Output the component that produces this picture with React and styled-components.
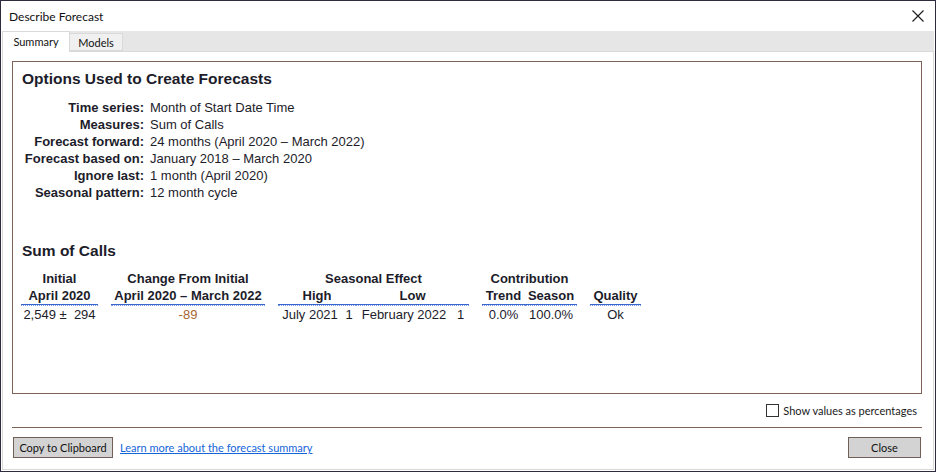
import React from 'react';
import styled, { createGlobalStyle } from 'styled-components';

const GlobalStyle = createGlobalStyle`
  html, body {
    margin: 0;
    padding: 0;
    background: #ffffff;
  }
  * {
    box-sizing: border-box;
  }
`;

const uiFont = `"Segoe UI", Lato, "Liberation Sans", sans-serif`;
const reportFont = `"Liberation Sans", Arial, sans-serif`;

const Window = styled.div`
  width: 936px;
  height: 472px;
  border: 1px solid #2c2c3c;
  background: #ffffff;
  display: flex;
  flex-direction: column;
  font-family: ${uiFont};
  color: #1a1a1a;
`;

const TitleBar = styled.div`
  height: 30px;
  display: flex;
  align-items: center;
  justify-content: space-between;
  padding: 0 8px 0 8px;
  font-size: 12px;
  color: #111;
`;

const CloseX = styled.button`
  width: 16px;
  height: 16px;
  border: none;
  background: none;
  padding: 0;
  margin-right: 1px;
  display: flex;
  align-items: center;
  justify-content: center;
`;

const TabStrip = styled.div`
  height: 20px;
  background: #e6e6e6;
  display: flex;
  align-items: flex-end;
  margin: 0 1px;
  position: relative;
  z-index: 1;
`;

const Tab = styled.div`
  height: ${p => (p.$active ? '21px' : '18px')};
  margin-bottom: ${p => (p.$active ? '-1px' : '0')};
  padding: ${p => (p.$active ? '0 0 2px' : '0')};
  width: ${p => p.$width}px;
  background: ${p => (p.$active ? '#ffffff' : '#f0f0f0')};
  border: 1px solid #d9d9d9;
  border-bottom: ${p => (p.$active ? 'none' : '1px solid #d9d9d9')};
  border-left: ${p => (p.$active ? '1px solid #d9d9d9' : 'none')};
  font-size: 11px;
  display: flex;
  align-items: center;
  justify-content: center;
  color: #111;
`;

const Page = styled.div`
  flex: 1;
  margin: 0 1px 1px 1px;
  border: 1px solid #d9d9d9;
  background: #ffffff;
  padding: 9px 11px 0 9px;
  display: flex;
  flex-direction: column;
`;

const ReportBox = styled.div`
  height: 333px;
  border: 1px solid #7b6358;
  padding: 7px 9px 0 9px;
  font-family: ${reportFont};
  font-size: 13px;
  color: #1c1c2a;
`;

const SectionTitle = styled.div`
  font-size: 15.5px;
  font-weight: bold;
  line-height: 20px;
  margin-top: ${p => p.$top || 0}px;
`;

const OptionList = styled.div`
  display: grid;
  grid-template-columns: 122px auto;
  column-gap: 6px;
  margin-top: 10px;
  line-height: 17px;
`;

const OptionLabel = styled.div`
  font-weight: bold;
  text-align: right;
  white-space: nowrap;
`;

const OptionValue = styled.div`
  white-space: nowrap;
`;

const SummaryTable = styled.div`
  display: flex;
  gap: 13px;
  margin-top: 9px;
  margin-left: -1px;
  line-height: 17px;
`;

const Group = styled.div`
  width: ${p => p.$width}px;
  display: grid;
  grid-template-columns: ${p => p.$cols};
`;

const GroupTitle = styled.div`
  grid-column: 1 / -1;
  font-weight: bold;
  text-align: center;
  white-space: nowrap;
`;

const SubHeader = styled.div`
  grid-column: span ${p => p.$span || 1};
  font-weight: bold;
  text-align: center;
  white-space: nowrap;
  border-bottom: 1px dotted #7d9be0;
  box-shadow: inset 0 -1px 0 #3766d2;
  height: 19px;
  line-height: 17px;
`;

const Cell = styled.div`
  text-align: center;
  white-space: nowrap;
  color: ${p => p.$color || 'inherit'};
`;

const CheckRow = styled.div`
  height: 33px;
  display: flex;
  align-items: center;
  justify-content: flex-end;
  gap: 4px;
  padding-right: 5px;
  font-size: 11px;
`;

const CheckBox = styled.span`
  width: 13px;
  height: 13px;
  border: 1px solid #333333;
  background: #ffffff;
  display: inline-block;
`;

const Divider = styled.div`
  height: 1px;
  background: #7b6358;
`;

const Footer = styled.div`
  display: flex;
  align-items: center;
  padding: 9px 1px 0 1px;
  gap: 7px;
`;

const Button = styled.button`
  height: 21px;
  width: ${p => p.$width}px;
  border: 1px solid #6f6058;
  background-color: #d3d3d3;
  background-image: radial-gradient(#e6e6e6 0.7px, transparent 0.7px);
  background-size: 2px 2px;
  font-family: ${uiFont};
  font-size: 11px;
  color: #111;
  padding: 0;
  margin-left: ${p => (p.$push ? 'auto' : '0')};
`;

const HelpLink = styled.a`
  font-size: 11px;
  color: #1565d8;
  text-decoration: underline;
  cursor: pointer;
`;

const options = [
  ['Time series:', 'Month of Start Date Time'],
  ['Measures:', 'Sum of Calls'],
  ['Forecast forward:', '24 months (April 2020 \u2013 March 2022)'],
  ['Forecast based on:', 'January 2018 \u2013 March 2020'],
  ['Ignore last:', '1 month (April 2020)'],
  ['Seasonal pattern:', '12 month cycle'],
];

export default function App() {
  return (
    <>
      <GlobalStyle />
      <Window>
        <TitleBar>
          <span>Describe Forecast</span>
          <CloseX aria-label="Close">
            <svg width="12" height="12" viewBox="0 0 12 12">
              <path d="M0.5 0.5 L11.5 11.5 M11.5 0.5 L0.5 11.5" stroke="#1a1a1a" strokeWidth="1.1" fill="none" />
            </svg>
          </CloseX>
        </TitleBar>
        <TabStrip>
          <Tab $active $width={68}>Summary</Tab>
          <Tab $width={53}>Models</Tab>
        </TabStrip>
        <Page>
          <ReportBox>
            <SectionTitle>Options Used to Create Forecasts</SectionTitle>
            <OptionList>
              {options.map(([label, value]) => (
                <React.Fragment key={label}>
                  <OptionLabel>{label}</OptionLabel>
                  <OptionValue>{value}</OptionValue>
                </React.Fragment>
              ))}
            </OptionList>

            <SectionTitle $top={40}>Sum of Calls</SectionTitle>
            <SummaryTable>
              <Group $width={77} $cols="1fr">
                <GroupTitle>Initial</GroupTitle>
                <SubHeader>April 2020</SubHeader>
                <Cell>2,549 ±&nbsp;&nbsp;294</Cell>
              </Group>
              <Group $width={154} $cols="1fr">
                <GroupTitle>Change From Initial</GroupTitle>
                <SubHeader>April 2020 – March 2022</SubHeader>
                <Cell $color="#a8662e">-89</Cell>
              </Group>
              <Group $width={191} $cols="64px 14px 96px 17px">
                <GroupTitle>Seasonal Effect</GroupTitle>
                <SubHeader $span={2}>High</SubHeader>
                <SubHeader $span={2}>Low</SubHeader>
                <Cell>July 2021</Cell>
                <Cell>1</Cell>
                <Cell>February 2022</Cell>
                <Cell>1</Cell>
              </Group>
              <Group $width={95} $cols="43px 52px">
                <GroupTitle>Contribution</GroupTitle>
                <SubHeader>Trend</SubHeader>
                <SubHeader>Season</SubHeader>
                <Cell>0.0%</Cell>
                <Cell>100.0%</Cell>
              </Group>
              <Group $width={51} $cols="1fr">
                <GroupTitle>&nbsp;</GroupTitle>
                <SubHeader>Quality</SubHeader>
                <Cell>Ok</Cell>
              </Group>
            </SummaryTable>
          </ReportBox>
          <CheckRow>
            <CheckBox />
            <span>Show values as percentages</span>
          </CheckRow>
          <Divider />
          <Footer>
            <Button $width={100}>Copy to Clipboard</Button>
            <HelpLink>Learn more about the forecast summary</HelpLink>
            <Button $width={73} $push>Close</Button>
          </Footer>
        </Page>
      </Window>
    </>
  );
}
